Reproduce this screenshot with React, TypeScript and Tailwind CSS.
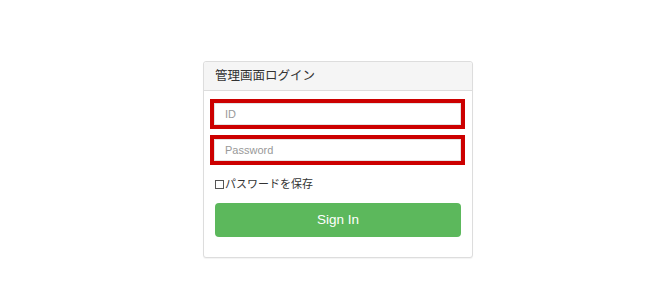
import React from "react";

export default function App() {
  return (
    <div className="w-[668px] h-[305px] bg-white pt-[61px] pl-[203px]" style={{ fontFamily: '"Liberation Sans", Arial, "Noto Sans CJK JP", sans-serif' }}>
      <div className="w-[270px] border border-[#dddddd] rounded-[3px] bg-white shadow-[0_1px_1px_rgba(0,0,0,0.05)]">
        <div className="h-[29px] bg-[#f5f5f5] border-b border-[#dddddd] rounded-t-[3px] px-[11px] flex items-center text-[12.5px] text-[#333333]">
          管理画面ログイン
        </div>
        <div className="pt-[12px] pb-[20px] pl-[10px] pr-[11px] flex flex-col">
          <div className="h-[22px] border border-[#e3e3e3] bg-white outline-[4px] outline-solid outline-[#cc0000] flex items-center pl-[10px] text-[11px] text-[#999999]">
            ID
          </div>
          <div className="mt-[14px] h-[22px] border border-[#e3e3e3] bg-white outline-[4px] outline-solid outline-[#cc0000] flex items-center pl-[10px] text-[11px] text-[#999999]">
            Password
          </div>
          <label className="mt-[15px] ml-[1px] h-[16px] flex items-center text-[11px] text-[#333333]">
            <span className="inline-block w-[9px] h-[9px] border border-[#555555] mr-[1px]" />
            パスワードを保存
          </label>
          <button className="mt-[11px] ml-[1px] h-[34px] rounded-[4px] bg-[#5cb85c] text-white text-[13.5px] flex items-center justify-center">
            Sign In
          </button>
        </div>
      </div>
    </div>
  );
}
